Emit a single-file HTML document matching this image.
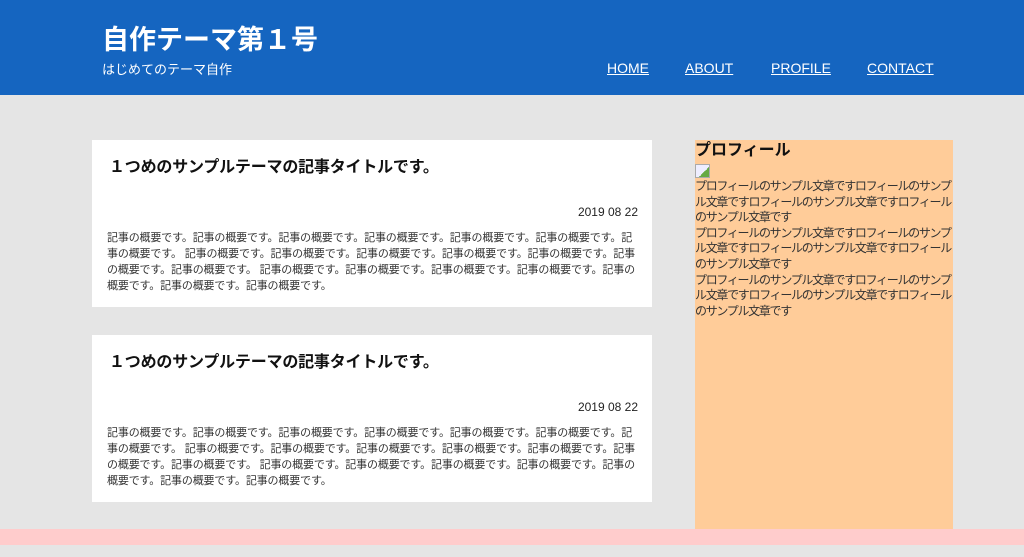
<!DOCTYPE html>
<html><head><meta charset="utf-8"><style>
*{margin:0;padding:0;box-sizing:border-box}
body{width:1024px;height:557px;background:#e5e5e5;font-family:"Liberation Sans","Noto Sans CJK JP",sans-serif;position:relative;overflow:hidden;color:#222}
header{position:absolute;left:0;top:0;width:1024px;height:95px;background:#1565c0;color:#fff}
h1{position:absolute;left:102px;top:18px;font-size:27px;font-weight:bold}
.sub{position:absolute;left:102px;top:59px;font-size:13px}
nav{position:absolute;top:60px;font-size:14px}
nav a{position:absolute;color:#fff;text-decoration:underline;white-space:nowrap}
.card{position:absolute;left:92px;width:560px;height:167px;background:#fff}
.card h2{position:absolute;left:17px;top:13px;font-size:16px;font-weight:bold;color:#111;letter-spacing:-0.2px}
.card .d{position:absolute;right:14px;top:65px;font-size:12px}
.card p{position:absolute;left:15px;top:90px;width:531px;font-size:11px;letter-spacing:-0.15px;line-height:16px;color:#333}
aside{position:absolute;left:695px;top:140px;width:258px;height:389px;background:#ffcc99}
aside h3{font-size:16px;font-weight:bold;line-height:22px;color:#111}
aside p{font-size:12px;letter-spacing:-1.3px;line-height:15.6px;color:#333}
.img{width:15px;height:14px;border:1px solid #aaa;margin:2px 0 1px;background:linear-gradient(135deg,#eef 60%,#6a4 60%)}
footer{position:absolute;left:0;top:529px;width:1024px;height:16px;background:#ffcccc}
</style></head><body>
<header><h1>自作テーマ第１号</h1><div class="sub">はじめてのテーマ自作</div>
<nav><a style="left:607px">HOME</a><a style="left:685px">ABOUT</a><a style="left:771px">PROFILE</a><a style="left:867px">CONTACT</a></nav></header>
<div class="card" style="top:140px"><h2>１つめのサンプルテーマの記事タイトルです。</h2><div class="d">2019 08 22</div><p>記事の概要です。記事の概要です。記事の概要です。記事の概要です。記事の概要です。記事の概要です。記事の概要です。 記事の概要です。記事の概要です。記事の概要です。記事の概要です。記事の概要です。記事の概要です。記事の概要です。 記事の概要です。記事の概要です。記事の概要です。記事の概要です。記事の概要です。記事の概要です。記事の概要です。</p></div>
<div class="card" style="top:335px"><h2>１つめのサンプルテーマの記事タイトルです。</h2><div class="d">2019 08 22</div><p>記事の概要です。記事の概要です。記事の概要です。記事の概要です。記事の概要です。記事の概要です。記事の概要です。 記事の概要です。記事の概要です。記事の概要です。記事の概要です。記事の概要です。記事の概要です。記事の概要です。 記事の概要です。記事の概要です。記事の概要です。記事の概要です。記事の概要です。記事の概要です。記事の概要です。</p></div>
<aside><h3>プロフィール</h3><div class="img"></div>
<p>プロフィールのサンプル文章ですロフィールのサンプル文章ですロフィールのサンプル文章ですロフィールのサンプル文章です</p>
<p>プロフィールのサンプル文章ですロフィールのサンプル文章ですロフィールのサンプル文章ですロフィールのサンプル文章です</p>
<p>プロフィールのサンプル文章ですロフィールのサンプル文章ですロフィールのサンプル文章ですロフィールのサンプル文章です</p></aside>
<footer></footer>
</body></html>
